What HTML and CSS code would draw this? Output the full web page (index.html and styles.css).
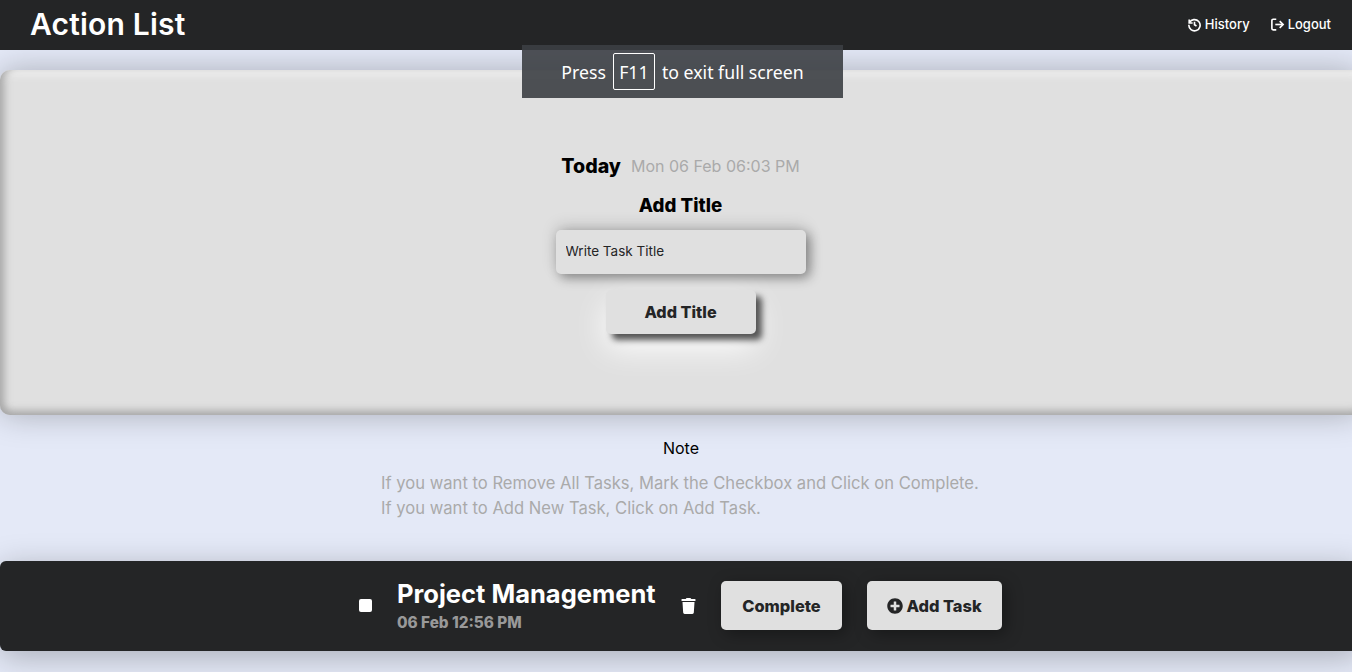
FILE: index.html
```html
<!DOCTYPE html>
<html lang="en">
<head>
    <meta charset="UTF-8">
    <meta name="viewport" content="width=device-width, initial-scale=1.0">
    <title>Action List</title>
    <link rel="stylesheet" href="styles.css">
</head>
<body>

<header class="topbar">
    <h1 class="logo">Action List</h1>
    <nav class="topnav">
        <a href="#">
            <svg class="nav-icon" viewBox="0 0 24 24"><path d="M3.5 4v5.5H9"/><path d="M3.9 9.2A9 9 0 1 1 3 12.5"/><path d="M12 7.5V12.5l3.2 2"/></svg>
            History
        </a>
        <a href="#">
            <svg class="nav-icon" viewBox="0 0 24 24"><path d="M10 3.5H5A2 2 0 0 0 3 5.500V18.500A2 2 0 0 0 5 20.500H10"/><path d="M8.500 12H21"/><path d="M15.500 6.500L21 12L15.500 17.500"/></svg>
            Logout
        </a>
    </nav>
</header>

<!-- Aviso del navegador -->
<div class="fullscreen-hint">Press <kbd>F11</kbd> to exit full screen</div>

<main>
    <section class="panel">
        <p class="today"><strong>Today</strong> <span>Mon 06 Feb 06:03 PM</span></p>
        <h2 class="add-heading">Add Title</h2>
        <input class="title-input" type="text" placeholder="Write Task Title">
        <button class="add-btn">Add Title</button>
    </section>

    <section class="note">
        <h3>Note</h3>
        <p>If you want to Remove All Tasks, Mark the Checkbox and Click on Complete.</p>
        <p>If you want to Add New Task, Click on Add Task.</p>
    </section>

    <section class="task-row">
        <input class="task-check" type="checkbox">
        <div class="task-info">
            <h2>Project Management</h2>
            <p>06 Feb 12:56 PM</p>
        </div>
        <svg class="trash" viewBox="0 0 448 512"><path d="M432 32H312l-9.4-18.7A24 24 0 0 0 281.1 0H166.800a23.720 23.720 0 0 0-21.400 13.300L136 32H16A16 16 0 0 0 0 48v32a16 16 0 0 0 16 16h416a16 16 0 0 0 16-16V48a16 16 0 0 0-16-16zM53.200 467a48 48 0 0 0 47.900 45h245.800a48 48 0 0 0 47.900-45L416 128H32z"/></svg>
        <button class="task-btn complete">Complete</button>
        <button class="task-btn add-task">
            <svg class="plus" viewBox="0 0 512 512"><path d="M256 8C119 8 8 119 8 256s111 248 248 248 248-111 248-248S393 8 256 8zm144 276c0 6.600-5.400 12-12 12h-92v92c0 6.600-5.400 12-12 12h-56c-6.600 0-12-5.400-12-12v-92h-92c-6.600 0-12-5.400-12-12v-56c0-6.600 5.400-12 12-12h92v-92c0-6.600 5.400-12 12-12h56c6.600 0 12 5.400 12 12v92h92c6.600 0 12 5.400 12 12v56z"/></svg>
            Add Task
        </button>
    </section>
</main>

</body>
</html>
```

FILE: styles.css
```css
/* General */
* {
    box-sizing: border-box;
}
html, body {
    overflow: hidden;
}
body {
    margin: 0;
    height: 672px;
    font-family: "Inter", "Liberation Sans", sans-serif;
    background-color: #e4e9f7;
    color: #000;
}

/* Top bar */
.topbar {
    height: 50px;
    background-color: #242526;
    color: #fff;
    display: flex;
    align-items: center;
    justify-content: space-between;
    padding: 0 21px 2px 30px;
    position: relative;
    z-index: 2;
}
.logo {
    margin: 0;
    font-size: 30px;
    font-weight: 600;
    letter-spacing: 0.2px;
}
.topnav {
    display: flex;
    gap: 20px;
}
.topnav a {
    display: flex;
    align-items: center;
    gap: 3px;
    color: #fff;
    font-size: 13px;
    font-weight: 500;
    text-decoration: none;
}
.nav-icon {
    width: 15px;
    height: 15px;
    fill: none;
    stroke: #fff;
    stroke-width: 2.6;
}

/* Full screen hint */
.fullscreen-hint {
    position: absolute;
    top: 45px;
    left: 522px;
    z-index: 3;
    width: 321px;
    height: 53px;
    display: flex;
    align-items: center;
    justify-content: center;
    gap: 7px;
    background-color: rgba(60, 63, 68, 0.9);
    color: #fff;
    font-family: "Noto Sans", sans-serif;
    font-size: 17.700px;
}
.fullscreen-hint kbd {
    width: 42px;
    height: 37px;
    display: flex;
    align-items: center;
    justify-content: center;
    border: 1px solid #fff;
    border-radius: 2px;
    font-family: inherit;
}

/* Main panel */
.panel {
    width: 1361px;
    height: 345px;
    margin-top: 20px;
    padding-top: 84px;
    display: flex;
    flex-direction: column;
    align-items: center;
    background-color: #e0e0e0;
    border-radius: 10px;
    box-shadow: inset 7px 0 8px -3px #a8a8a8, inset 0 -7px 8px -3px #a8a8a8, inset 0 7px 8px -3px #f6f6f6, 0 0 32px rgba(0, 0, 0, 0.26);
}
.today {
    margin: 0;
    height: 24px;
    display: flex;
    align-items: center;
    gap: 10px;
    font-size: 19.600px;
}
.today strong {
    font-weight: 800;
}
.today span {
    color: #aaa;
    font-size: 16px;
}
.add-heading {
    margin: 15px 0 0;
    height: 26px;
    line-height: 26px;
    font-size: 18.700px;
    font-weight: 800;
}
.title-input {
    width: 250px;
    height: 44px;
    margin-top: 11px;
    padding: 0 10px 2px;
    border: none;
    border-radius: 5px;
    background-color: #e0e0e0;
    font-family: inherit;
    font-size: 13.500px;
    box-shadow: 4px 4px 12px rgba(0, 0, 0, 0.38), 0 -4px 16px rgba(0, 0, 0, 0.14);
}
.title-input::placeholder {
    color: #242526;
    opacity: 1;
}
.add-btn {
    width: 150px;
    height: 44px;
    margin-top: 16px;
    padding-bottom: 2px;
    border: none;
    border-radius: 5px;
    background-color: #e0e0e0;
    color: #242526;
    font-family: inherit;
    font-size: 16.200px;
    font-weight: 800;
    box-shadow: 6px 6px 6px #555, 0 14px 32px #fff;
}

/* Note */
.note {
    padding-top: 23px;
    height: 146px;
    font-size: 16.600px;
    color: #aaa;
}
.note h3 {
    margin: 0 0 13px;
    text-align: center;
    color: #000;
    font-size: 16px;
    line-height: 20px;
    font-weight: 400;
    transform: translateX(5px);
}
.note p {
    margin: 0 0 0 381px;
    line-height: 25px;
}

/* Task row */
.task-row {
    width: 1361px;
    height: 90px;
    display: flex;
    align-items: center;
    padding: 0 0 1px 359px;
    background-color: #242526;
    color: #fff;
    border-radius: 6px;
    box-shadow: 0 6px 32px rgba(0, 0, 0, 0.26);
}
.task-check {
    appearance: none;
    width: 13px;
    height: 13px;
    margin: 0;
    background-color: #fff;
    border-radius: 2px;
}
.task-info {
    width: 284px;
    margin-left: 25px;
}
.task-info h2 {
    margin: 0;
    font-size: 25.500px;
    line-height: 32px;
    font-weight: 700;
}
.task-info p {
    margin: 2px 0 0;
    color: #999;
    font-size: 15.300px;
    line-height: 22px;
    font-weight: 800;
}
.trash {
    width: 15px;
    height: 16px;
    fill: #fff;
}
.task-btn {
    height: 49px;
    border: none;
    border-radius: 5px;
    background-color: #e0e0e0;
    color: #242526;
    font-family: inherit;
    font-size: 16.400px;
    font-weight: 800;
    box-shadow: 4px 4px 16px rgba(0, 0, 0, 0.35);
}
.complete {
    width: 121px;
    margin-left: 25px;
}
.add-task {
    width: 135px;
    margin-left: 25px;
    display: flex;
    align-items: center;
    justify-content: center;
    gap: 3px;
}
.plus {
    width: 16px;
    height: 16px;
    fill: #242526;
}
```
